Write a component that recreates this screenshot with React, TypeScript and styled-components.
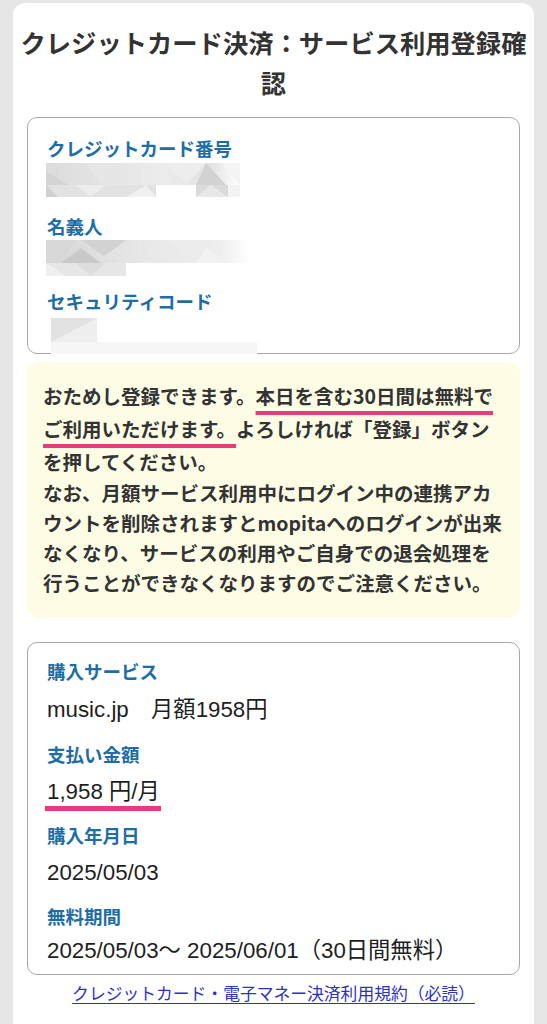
import React from "react";
import styled, { createGlobalStyle } from "styled-components";

const GlobalStyle = createGlobalStyle`
  html, body { margin: 0; padding: 0; background: #e6e6e6; }
  body { font-family: "Noto Sans CJK JP", "Noto Sans", sans-serif; }
  * { box-sizing: border-box; }
`;

const Page = styled.div`
  padding: 3px 13px 0;
`;

const Panel = styled.main`
  background: #fff;
  border-radius: 12px 12px 0 0;
  padding: 19px 4px 40px;
  min-height: 1040px;
`;

const Title = styled.h1`
  margin: 0;
  font-size: 25.3px;
  line-height: 40px;
  font-weight: 700;
  color: #333;
  text-align: center;
`;

const Card = styled.section<{ $mt: number; $pad: string }>`
  margin: ${(p) => p.$mt}px 10px 0;
  border: 1px solid #a9a9a9;
  border-radius: 10px;
  padding: ${(p) => p.$pad};
  background: #fff;
`;

const Field = styled.div<{ $mt?: number }>`
  margin-top: ${(p) => p.$mt ?? 0}px;
`;

const Label = styled.div`
  font-size: 18.5px;
  line-height: 26px;
  font-weight: 700;
  color: #1d6da6;
`;

const Value = styled.div<{ $mt: number }>`
  margin-top: ${(p) => p.$mt}px;
  font-family: "Liberation Sans", "Noto Sans CJK JP", sans-serif;
  font-size: 22.3px;
  line-height: 30px;
  color: #1e1e1e;
  white-space: nowrap;
`;

const Amount = styled.span`
  padding: 0 1px 7px 2px;
  margin-left: -2px;
  background: linear-gradient(#e63b7e, #e63b7e) no-repeat left bottom / 100% 5px;
`;

const MosaicBox = styled.div<{ $mt: number; $ml: number; $w: number; $h: number; $mb?: number }>`
  margin: ${(p) => p.$mt}px 0 ${(p) => p.$mb ?? 0}px ${(p) => p.$ml}px;
  width: ${(p) => p.$w}px;
  height: ${(p) => p.$h}px;
  position: relative;
  svg { display: block; }
`;

const Notice = styled.div`
  margin: 8px 10px 0;
  background: #fdfde6;
  border-radius: 12px;
  padding: 17px 8px 20px 16px;
  color: #333;
  font-weight: 700;
  font-size: 19.5px;
  white-space: nowrap;
`;

const Para = styled.p<{ $lh: number }>`
  margin: 0;
  line-height: ${(p) => p.$lh}px;
`;

const Mark = styled.span`
  text-decoration: underline;
  text-decoration-color: #e63b7e;
  text-decoration-thickness: 4px;
  text-underline-offset: 7px;
  text-decoration-skip-ink: none;
`;

const Footer = styled.div`
  margin-top: 6px;
  text-align: center;
  line-height: 24px;
`;

const TermsLink = styled.a`
  color: #2c2fc9;
  font-size: 16.8px;
  text-decoration: underline;
  text-underline-offset: 3px;
`;

type Variant = 1 | 2 | 3;

const Mosaic: React.FC<{ v: Variant; w: number; h: number; mt: number; ml: number; mb?: number }> = ({ v, w, h, mt, ml, mb }) => {
  let shapes: React.ReactNode = null;
  if (v === 1) {
    shapes = (
      <>
        <defs>
          <linearGradient id="m1" x1="0" x2="1" y1="0" y2="0">
            <stop offset="0" stopColor="#dcdcdc" />
            <stop offset="0.6" stopColor="#ececec" />
            <stop offset="0.85" stopColor="#e2e2e2" />
            <stop offset="1" stopColor="#ffffff" />
          </linearGradient>
        </defs>
        <rect x="0" y="0" width={w} height="22" fill="url(#m1)" />
        <polygon points="0,8 22,22 0,22" fill="#d4d4d4" />
        <polygon points="40,0 70,0 55,22" fill="#e6e6e6" />
        <polygon points="120,0 160,0 140,22" fill="#ededed" />
        <polygon points="160,0 180,22 150,22" fill="#d2d2d2" />
        <polygon points="175,0 194,0 194,22" fill="#f4f4f4" />
        <rect x="0" y="22" width="110" height="12" fill="#e2e2e2" />
        <polygon points="0,22 12,34 0,34" fill="#d0d0d0" />
        <polygon points="30,22 60,22 45,34" fill="#ececec" />
        <polygon points="80,34 100,22 110,34" fill="#f0f0f0" />
        <rect x="110" y="22" width="40" height="12" fill="#ffffff" />
        <rect x="150" y="22" width="32" height="12" fill="#dadada" />
        <polygon points="150,34 165,22 182,34" fill="#e8e8e8" />
        <rect x="182" y="22" width="12" height="12" fill="#f3f3f3" />
      </>
    );
  } else if (v === 2) {
    shapes = (
      <>
        <defs>
          <linearGradient id="m2" x1="0" x2="1" y1="0" y2="0">
            <stop offset="0" stopColor="#d6d6d6" />
            <stop offset="0.5" stopColor="#e8e8e8" />
            <stop offset="0.85" stopColor="#eeeeee" />
            <stop offset="1" stopColor="#ffffff" />
          </linearGradient>
        </defs>
        <rect x="0" y="0" width={w} height="23" fill="url(#m2)" />
        <polygon points="0,0 30,0 15,23 0,23" fill="#d8d8d8" />
        <polygon points="15,23 35,8 55,23" fill="#c9c9c9" />
        <polygon points="35,0 80,0 58,16" fill="#d2d2d2" />
        <polygon points="120,0 170,0 150,23" fill="#ececec" />
        <polygon points="160,8 184,23 150,23" fill="#f2f2f2" />
        <rect x="0" y="23" width="80" height="13" fill="#e6e6e6" />
        <polygon points="0,23 20,36 0,36" fill="#efefef" />
        <polygon points="30,23 60,23 45,36" fill="#dddddd" />
      </>
    );
  } else {
    shapes = (
      <>
        <rect x="0" y="0" width="46" height="24" fill="#e2e2e2" />
        <polygon points="0,24 46,0 46,24" fill="#eeeeee" />
        <rect x="0" y="24" width={w} height="12" fill="#f6f6f6" />
      </>
    );
  }
  return (
    <MosaicBox $mt={mt} $ml={ml} $w={w} $h={h} $mb={mb}>
      <svg width={w} height={h} viewBox={`0 0 ${w} ${h}`}>
        {shapes}
      </svg>
    </MosaicBox>
  );
};

export default function App() {
  return (
    <>
      <GlobalStyle />
      <Page>
        <Panel>
          <Title>
            クレジットカード決済：サービス利用登録確
            <br />認
          </Title>

          <Card $mt={15} $pad="17px 19px 0">
            <Field>
              <Label>クレジットカード番号</Label>
              <Mosaic v={1} w={194} h={34} mt={2} ml={-1} />
            </Field>
            <Field $mt={16}>
              <Label>名義人</Label>
              <Mosaic v={2} w={204} h={36} mt={1} ml={-1} />
            </Field>
            <Field $mt={12}>
              <Label>セキュリティコード</Label>
              <Mosaic v={3} w={206} h={36} mt={4} ml={4} mb={-1} />
            </Field>
          </Card>

          <Notice>
            <Para $lh={33}>
              おためし登録できます。<Mark>本日を含む30日間は無料で</Mark>
              <br />
              <Mark>ご利用いただけます。</Mark>よろしければ「登録」ボタン
              <br />
              を押してください。
            </Para>
            <Para $lh={30}>
              なお、月額サービス利用中にログイン中の連携アカ
              <br />
              ウントを削除されますとmopitaへのログインが出来
              <br />
              なくなり、サービスの利用やご自身での退会処理を
              <br />
              行うことができなくなりますのでご注意ください。
            </Para>
          </Notice>

          <Card $mt={24} $pad="15px 19px 8px">
            <Field>
              <Label>購入サービス</Label>
              <Value $mt={11}>music.jp　月額1958円</Value>
            </Field>
            <Field $mt={16}>
              <Label>支払い金額</Label>
              <Value $mt={10}>
                <Amount>1,958 円/月</Amount>
              </Value>
            </Field>
            <Field $mt={15}>
              <Label>購入年月日</Label>
              <Value $mt={10}>2025/05/03</Value>
            </Field>
            <Field $mt={15}>
              <Label>無料期間</Label>
              <Value $mt={7}>2025/05/03〜 2025/06/01（30日間無料）</Value>
            </Field>
          </Card>

          <Footer>
            <TermsLink href="#">クレジットカード・電子マネー決済利用規約（必読）</TermsLink>
          </Footer>
        </Panel>
      </Page>
    </>
  );
}
